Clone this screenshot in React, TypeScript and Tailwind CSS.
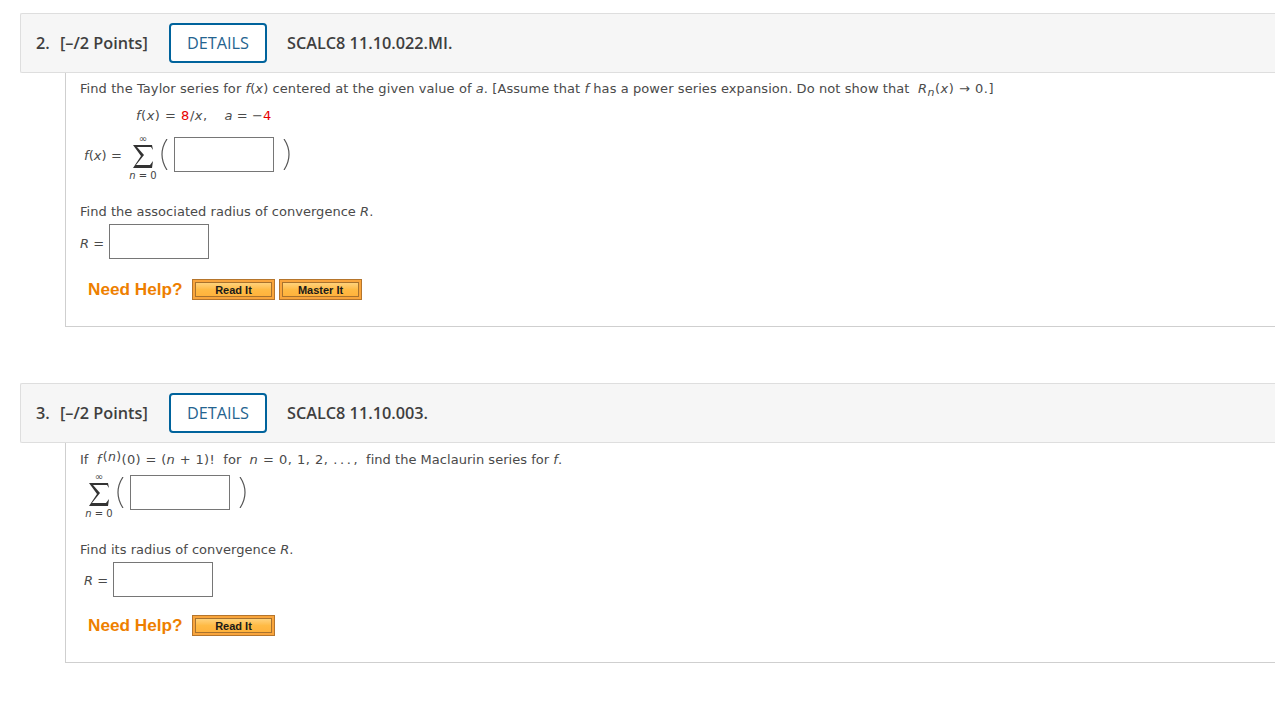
import React from 'react';

const bodyFont = "font-['DejaVu_Sans',Verdana,sans-serif] tracking-[0.08px]";

const Var: React.FC<{ children: React.ReactNode }> = ({ children }) => (
  <i className="italic">{children}</i>
);

const Math: React.FC<{ children: React.ReactNode }> = ({ children }) => (
  <span className="tracking-[0.5px]">{children}</span>
);

const AnswerBox: React.FC = () => (
  <div className="w-[100px] h-[35px] border border-[#767676] bg-white shrink-0"></div>
);

const HelpButton: React.FC<{ label: string }> = ({ label }) => (
  <button className="w-[83px] h-[21px] border border-[#b5752c] bg-[#f9a53c] p-[2px] flex">
    <span className="flex-1 flex items-center justify-center pt-[1px] border border-[#a8722e] bg-gradient-to-b from-[#ffd27a] via-[#ffbb45] to-[#ffb23c] font-['Liberation_Sans',Arial,sans-serif] font-bold text-[11px] tracking-normal text-[#1a1a1a]">
      {label}
    </span>
  </button>
);

const NeedHelp: React.FC<{ labels: string[] }> = ({ labels }) => (
  <div className="flex items-center ml-[8px]">
    <span className="font-['Liberation_Sans',Arial,sans-serif] font-bold text-[17.2px] tracking-normal h-[21px] leading-[21px] text-[#ee7f00] w-[104px]">Need Help?</span>
    <div className="flex gap-[4px]">
      {labels.map(l => <HelpButton key={l} label={l} />)}
    </div>
  </div>
);

const Sigma: React.FC = () => (
  <div className="w-[30px] h-[47px] flex flex-col items-center text-[#444] shrink-0">
    <span className="text-[10px] tracking-normal leading-[8px] h-[8px]">∞</span>
    <svg width="22" height="23" viewBox="0 0 22 23" className="mt-[2px]">
      <path d="M1 0 H20 L21 5 L19 2 H5 L12 10 L4 20 H18 L21 16 L20 23 H1 L9 11 Z" fill="#333" />
    </svg>
    <span className="text-[10px] tracking-normal leading-[12px] mt-[2px] whitespace-nowrap"><Var>n</Var> = 0</span>
  </div>
);

const Paren: React.FC<{ flip?: boolean; className: string }> = ({ flip, className }) => (
  <svg width="7" height="31" viewBox="0 0 7 31" className={`${className} mt-[4px] shrink-0`}>
    <path d={flip ? 'M1 0 C5 6 6 11 6 15.5 C6 20 5 25 1 31' : 'M6 0 C2 6 1 11 1 15.5 C1 20 2 25 6 31'} fill="none" stroke="#555" strokeWidth="1.2" />
  </svg>
);

const Series: React.FC = () => (
  <div className="flex items-start h-[47px]">
    <Sigma />
    <Paren className="ml-[3px]" />
    <div className="ml-[6px] mt-[2px]"><AnswerBox /></div>
    <Paren flip className="ml-[9px]" />
  </div>
);

const QuestionHeader: React.FC<{ num: string; code: string }> = ({ num, code }) => (
  <div className="h-[60px] ml-[20px] flex items-center bg-[#f6f6f6] border border-[#dedede] border-r-0 rounded-l-[2px] font-['Open_Sans',sans-serif] font-semibold text-[#3f3f3f] text-[16.25px]">
    <span className="ml-[15px] w-[24px]">{num}</span>
    <span className="w-[109px]">[–/2 Points]</span>
    <span className="w-[98px] h-[40px] flex items-center justify-center border-2 border-[#00639c] rounded-[4px] bg-white text-[#24638f] font-normal">DETAILS</span>
    <span className="ml-[20px]">{code}</span>
  </div>
);

const App: React.FC = () => {
  return (
    <div className="w-[1275px] h-[713px] bg-white overflow-hidden pt-[13px]">
      <QuestionHeader num="2." code="SCALC8 11.10.022.MI." />
      <div className={`ml-[65px] h-[254px] border-l border-b border-[#cfcfcf] pl-[14px] text-[13px] text-[#4a4a4a] ${bodyFont}`}>
        <p className="pt-[7px] h-[31px] leading-[18px] whitespace-nowrap">
          Find the Taylor series for <Var>f</Var>(<Var>x</Var>) centered at the given value of <Var>a</Var>. [Assume that <Var>f</Var> has a power series expansion. Do not show that &nbsp;<Math><Var>R<sub className="text-[11px]">n</sub></Var>(<Var>x</Var>) → 0.]</Math>
        </p>
        <p className="ml-[56px] h-[21px] pt-[1px] leading-[22px] whitespace-nowrap">
          <Math><Var>f</Var>(<Var>x</Var>) = <span className="text-[#e60000]">8</span>/<Var>x</Var>,</Math>&nbsp;&nbsp;&nbsp; <Var>a</Var> = −<span className="text-[#e60000]">4</span>
        </p>
        <div className="flex items-start h-[47px] ml-[4px] mt-[10px]">
          <span className="whitespace-nowrap w-[44px] mt-[12px] leading-[18px]"><Var>f</Var>(<Var>x</Var>) =</span>
          <Series />
        </div>
        <p className="mt-[21px] leading-[18px] tracking-[0.03px]">Find the associated radius of convergence <Var>R</Var>.</p>
        <div className="flex items-center mt-[3px] h-[35px]">
          <span className="w-[29px] pt-[5px]"><Var>R</Var> =</span>
          <AnswerBox />
        </div>
        <div className="mt-[20px]"><NeedHelp labels={['Read It', 'Master It']} /></div>
      </div>

      <div className="h-[56px]"></div>

      <QuestionHeader num="3." code="SCALC8 11.10.003." />
      <div className={`ml-[65px] h-[220px] border-l border-b border-[#cfcfcf] pl-[14px] text-[13px] text-[#4a4a4a] ${bodyFont}`}>
        <p className="pt-[7px] h-[30px] leading-[20px] whitespace-nowrap tracking-[0.03px]">
          If&nbsp; <span className="tracking-[0.35px]"><Var>f</Var><sup className="text-[12.5px] ml-[1px] top-[-3px]">(<Var>n</Var>)</sup>(0) = (<Var>n</Var> + 1)!</span>&nbsp; for&nbsp; <Math><Var>n</Var> = 0, 1, 2, </Math>.{'\u2009'}.{'\u2009'}.{'\u2009'},&nbsp; find the Maclaurin series for <Var>f</Var>.
        </p>
        <div className="ml-[4px]"><Series /></div>
        <p className="mt-[21px] leading-[18px] tracking-[0.03px]">Find its radius of convergence <Var>R</Var>.</p>
        <div className="flex items-center mt-[3px] h-[35px] ml-[4px]">
          <span className="w-[29px] pt-[3px]"><Var>R</Var> =</span>
          <AnswerBox />
        </div>
        <div className="mt-[18px]"><NeedHelp labels={['Read It']} /></div>
      </div>
    </div>
  );
};

export default App;
